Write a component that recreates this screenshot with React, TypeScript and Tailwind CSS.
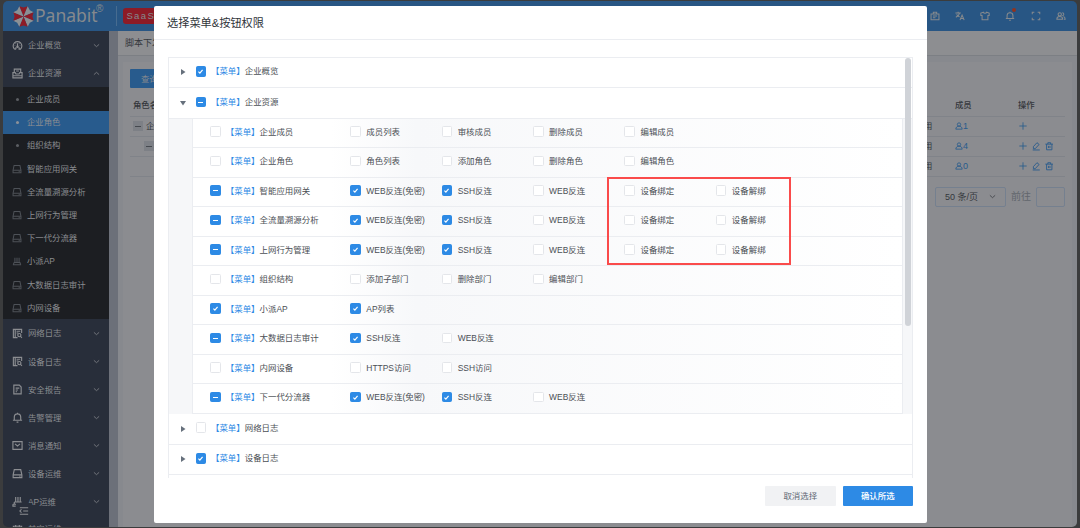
import type { ReactNode } from "react";
import clsx from "clsx";

type CheckState = "on" | "off" | "part";

interface PermissionRow {
  name: string;
  state: CheckState;
  actions: [string, boolean][];
}

const gatewayActions: [string, boolean][] = [
  ["WEB反连(免密)", true],
  ["SSH反连", true],
  ["WEB反连", false],
  ["设备绑定", false],
  ["设备解绑", false],
];

const permissionRows: PermissionRow[] = [
  { name: "企业成员", state: "off", actions: [["成员列表", false], ["审核成员", false], ["删除成员", false], ["编辑成员", false]] },
  { name: "企业角色", state: "off", actions: [["角色列表", false], ["添加角色", false], ["删除角色", false], ["编辑角色", false]] },
  { name: "智能应用网关", state: "part", actions: gatewayActions },
  { name: "全流量溯源分析", state: "part", actions: gatewayActions },
  { name: "上网行为管理", state: "part", actions: gatewayActions },
  { name: "组织结构", state: "off", actions: [["添加子部门", false], ["删除部门", false], ["编辑部门", false]] },
  { name: "小派AP", state: "on", actions: [["AP列表", true]] },
  { name: "大数据日志审计", state: "part", actions: [["SSH反连", true], ["WEB反连", false]] },
  { name: "内网设备", state: "off", actions: [["HTTPS访问", false], ["SSH访问", false]] },
  { name: "下一代分流器", state: "part", actions: gatewayActions.slice(0, 3) },
];

const icons: Record<string, ReactNode> = {
  gauge: (
    <>
      <path d="M5.5 20a9.5 9.5 0 1 1 13 0h-3v-4M8.500 20h-3M8.500 20v-4M12 13V7" />
      <path d="M6 12h1M17 12h1M8 7.500l.7.7M16 7.500l-.7.7" />
      <circle cx="12" cy="14.500" r="1.500" />
    </>
  ),
  archive: <path d="M5 10V2.500h14V10M9 6.500h6M2 10h5l1.500 3h7l1.500-3h5v11.500H2zM2 17h20" />,
  disk: <path d="M5 3.500h14l2.500 11.500v6h-19v-6zM2.500 15h19M16 18h2.500" />,
  router: <path d="M2 21h20M5 15.500h14l2 5.500M5 15.500 3 21M7 15V4M12 15V4M17 15V4" />,
  log: (
    <>
      <path d="M21 11V3H3v18h9M7 3v18M10 7h8M10 11h4" />
      <circle cx="16" cy="15.500" r="3.500" />
      <path d="m18.500 18 3 3.500" />
    </>
  ),
  report: <path d="M4 2.500h12l4 4v15H4zM8 9h8M8 13h5M8 17h3" />,
  bell: <path d="M12 1.500v2M5 18v-7a7 7 0 0 1 14 0v7M2 18h20M10 22h4" />,
  mail: <path d="M2 3.500h20v17H2zM6.500 8.500 12 13l5.500-4.500" />,
  ap: <path d="M8 2v11M13 2v11M18 2v11M5 13h16M5 13v5M2 18h9M2 18v4h6" />,
  calendar: <path d="M3 5h18v17H3zM3 10h18M8 2v5M16 2v5" />,
  badge: <path d="M2.500 7h19v14h-19zM8 7V3h8v4M7 12h10M7 16h6" />,
  translate: <path d="M1 5h13M7.500 2v3M2 15c5-2 8-6 9-10M4 8c1 3 4 5 7 6M12 22l5-12 5 12M14 18h6" />,
  shirt: <path d="M8 3 2 5v6h3v10h14V11h3V5l-6-2c-1 3-7 3-8 0z" />,
  expand: <path d="M3 8V3h5M16 3h5v5M21 16v5h-5M8 21H3v-5" />,
  users: (
    <>
      <circle cx="9" cy="8" r="4" />
      <path d="M2 20c0-9 14-9 14 0zM15 4c5 0 5 7 0 7M18 13c3 1 4 3 4 7h-3" />
    </>
  ),
  user: (
    <>
      <circle cx="12" cy="7.500" r="5" />
      <path d="M2.500 21.500c0-12 19-12 19 0z" />
    </>
  ),
  plus: <path d="M12 1v22M1 12h22" />,
  edit: <path d="m4 13 10-11 6 5L9 19H4zM2 22.500h20" />,
  trash: <path d="M1 6h22M8 6V2h8v4M4.500 6v16h15V6M10 11v6M14 11v6" />,
  fold: <path d="M2 4h20M10 12h12M2 20h20M6 8l-4 4 4 4" />,
  down: <path d="m3 8 9 8 9-8" />,
  up: <path d="m3 16 9-8 9 8" />,
};

const Icon = ({ name, className }: { name: string; className?: string }) => (
  <svg viewBox="0 0 24 24" fill="none" stroke="currentColor" strokeWidth="2.500" className={clsx("shrink-0", className)}>
    {icons[name]}
  </svg>
);

const Logo = () => (
  <svg viewBox="0 0 40 40" className="size-[21px] shrink-0">
    {[0, 45, 90, 135, 180, 225, 270, 315].map((angle, i) => (
      <path
        key={angle}
        d="M20 20 12 .700 20 3 28 .700z"
        fill={i % 2 ? "#8b9095" : "#8d1b26"}
        transform={`rotate(${angle} 20 20)`}
      />
    ))}
  </svg>
);

const Checkbox = ({ state }: { state: CheckState }) => (
  <span
    className={clsx(
      "flex size-[10.500px] shrink-0 items-center justify-center rounded-[1.500px] border",
      state === "off" ? "border-[#e4e6ea] bg-white" : "border-[#2d8ae5] bg-[#2d8ae5]",
    )}
  >
    {state === "on" && (
      <svg viewBox="0 0 10 10" fill="none" stroke="white" strokeWidth="1.300" className="size-[9px] shrink-0">
        <path d="m2.700 5.200 1.600 1.600 3-3.600" />
      </svg>
    )}
    {state === "part" && <span className="h-px w-[5px] bg-white" />}
  </span>
);

const MenuLabel = ({ name }: { name: string }) => (
  <span className="whitespace-nowrap">
    <span className="text-[#2d8ae5]">【菜单】</span>
    {name}
  </span>
);

const GroupRow = ({ name, state, open }: { name: string; state: CheckState; open?: boolean }) => (
  <div className="flex h-[30.700px] shrink-0 items-center border-b border-[#ebedf1] pb-[2px] pl-[11px]">
    <svg viewBox="0 0 6 6" className={clsx("mt-[2px] mr-[10px] size-[6px]", open && "rotate-90")}>
      <path d="M1 0 5.500 3 1 6z" fill="#66707c" />
    </svg>
    <Checkbox state={state} />
    <span className="ml-[5px] flex">
      <MenuLabel name={name} />
    </span>
  </div>
);

const NavItem = ({ icon, label, open }: { icon: string; label: string; open?: boolean }) => (
  <div className="flex h-[28.100px] shrink-0 items-center pr-[9px] pl-[9px]">
    <Icon name={icon} className="size-[11px]" />
    <span className="ml-[5px] flex-1">{label}</span>
    <Icon name={open ? "up" : "down"} className="size-[7px]" />
  </div>
);

const SubItem = ({ icon, label, active }: { icon?: string; label: string; active?: boolean }) => (
  <div className={clsx("flex h-[23.200px] shrink-0 items-center pl-[9px]", active && "bg-[#285b8d]")}>
    <span className="flex w-[10px] justify-center text-[#4d5157]">
      {icon ? (
        <Icon name={icon} className="size-[10px]" />
      ) : (
        <span className={clsx("size-[3px] rounded-full", active ? "bg-[#8b9199]" : "bg-[#5b5e63]")} />
      )}
    </span>
    <span className="ml-[5px]">{label}</span>
  </div>
);

const Sidebar = () => (
  <aside className="relative flex w-[106px] shrink-0 flex-col overflow-hidden bg-[#282e3a] pt-[0.300px] text-[8.400px] text-[#8b8d91]">
    <NavItem icon="gauge" label="企业概览" />
    <NavItem icon="archive" label="企业资源" open />
    <div className="shrink-0 bg-[#1c1e22]">
      <SubItem label="企业成员" />
      <SubItem label="企业角色" active />
      <SubItem label="组织结构" />
      <SubItem icon="disk" label="智能应用网关" />
      <SubItem icon="disk" label="全流量溯源分析" />
      <SubItem icon="disk" label="上网行为管理" />
      <SubItem icon="disk" label="下一代分流器" />
      <SubItem icon="router" label="小派AP" />
      <SubItem icon="disk" label="大数据日志审计" />
      <SubItem icon="disk" label="内网设备" />
    </div>
    <NavItem icon="log" label="网络日志" />
    <NavItem icon="log" label="设备日志" />
    <NavItem icon="report" label="安全报告" />
    <NavItem icon="bell" label="告警管理" />
    <NavItem icon="mail" label="消息通知" />
    <NavItem icon="disk" label="设备运维" />
    <NavItem icon="ap" label="AP运维" />
    <div className="-mt-px">
      <NavItem icon="calendar" label="其它运维" />
    </div>
    <div className="absolute top-[472px] left-[13px] bg-[#282e3a] p-[3px]">
      <Icon name="fold" className="size-[10px]" />
    </div>
  </aside>
);

const Header = () => (
  <header className="flex h-[30px] shrink-0 items-center bg-[#285684] pl-[10px] text-[#85898d]">
    <Logo />
    <span className="ml-px w-[61px] font-['Noto_Sans'] text-[17.500px] leading-none">Panabit</span>
    <span className="mb-[14px] text-[10px] leading-none">®</span>
    <span className="ml-[13px] h-[20px] w-px bg-[#476c90]" />
    <span className="ml-[6px] flex h-[16px] w-[44px] items-center rounded-[3px] bg-[#8d1b26] pl-[3px] text-[9.500px] font-medium tracking-[1.400px]">
      SaaS
    </span>
    <div className="ml-auto flex gap-[15.300px] pr-[11px]">
      <Icon name="badge" className="size-[10px]" />
      <Icon name="translate" className="size-[10px]" />
      <Icon name="shirt" className="size-[10px]" />
      <span className="relative">
        <Icon name="bell" className="size-[10px]" />
        <span className="absolute -top-[3px] left-[7px] size-[4px] rounded-full bg-[#90331f]" />
      </span>
      <Icon name="expand" className="size-[10px]" />
      <Icon name="users" className="size-[10px]" />
    </div>
  </header>
);

const RoleRow = ({ count, editable, child }: { count: string; editable?: boolean; child?: boolean }) => (
  <div className="flex h-[20.200px] items-center border-b border-[#808389]">
    {count !== "0" && (
      <span className={clsx("flex size-[10px] items-center justify-center bg-[#7d8086]", child ? "ml-[14px]" : "ml-[3px]")}>
        <span className="h-px w-[6px] bg-[#45494f]" />
      </span>
    )}
    {!child && <span className="ml-[3px]">企业</span>}
    <div className="ml-auto flex w-[141px] items-center">
      <span className="w-[31px]">用</span>
      <span className="flex w-[64px] items-center text-[9px] text-[#285b8d]">
        <Icon name="user" className="size-[8px]" />
        {count}
      </span>
      <span className="flex gap-[4.500px] text-[#285b8d]">
        <Icon name="plus" className="size-[8px]" />
        {editable && <Icon name="edit" className="size-[8.500px]" />}
        {editable && <Icon name="trash" className="size-[8.500px]" />}
      </span>
    </div>
  </div>
);

const RolePage = () => (
  <main className="flex flex-1 flex-col bg-[#87898e]">
    <div className="flex h-[25px] items-center border-b border-[#7c7f84] bg-[#8d8e91] pl-[7px] text-[9px]">脚本下发</div>
    <div className="mx-[5px] mt-[6px] flex-1 bg-[#8b8c90] px-[7px] pt-[7px]">
      <div className="flex h-[19px] w-[50px] items-center rounded-[1px] bg-[#285b8d] pl-[11px] text-[#85898d]">查询</div>
      <div className="mt-[6px] flex h-[22.500px] items-center border-b border-[#808389] font-medium">
        <span className="pl-[3px]">角色名称</span>
        <div className="ml-auto flex w-[141px]">
          <span className="w-[31px]" />
          <span className="w-[63px]">成员</span>
          <span>操作</span>
        </div>
      </div>
      <RoleRow count="1" />
      <RoleRow count="4" editable child />
      <RoleRow count="0" editable child />
      <div className="mt-[9.500px] flex items-center justify-end text-[9px]">
        <span className="flex h-[20px] w-[71px] items-center justify-between rounded-[2px] border border-[#75808f] px-[9px]">
          50 条/页
          <Icon name="down" className="size-[7px]" />
        </span>
        <span className="ml-[5px] text-[10px] text-[#62666d]">前往</span>
        <span className="ml-[5px] h-[20px] w-[29px] rounded-[2px] border border-[#75808f]" />
      </div>
    </div>
  </main>
);

const PermissionTable = () => (
  <div className="flex">
    <div className="w-[23.500px] shrink-0 bg-[#f6f7f9]" />
    <div className="flex-1 border-l border-[#ebedf1]">
      {permissionRows.map((row) => (
        <div key={row.name} className="flex h-[29.500px] items-center border-b border-[#ebedf1]">
          <div className="flex w-[138px] shrink-0 items-center pb-[3px] pl-[17.300px]">
            <Checkbox state={row.state} />
            <span className="ml-[5px] flex">
              <MenuLabel name={row.name} />
            </span>
          </div>
          <div className="flex h-full flex-1 items-center bg-linear-to-r from-white via-[#f7f8fa] via-15% to-white pb-[3px] pl-[19.300px]">
            {row.actions.map(([label, checked]) => (
              <div key={label} className="flex w-[91.400px] shrink-0 items-center gap-[5.500px] whitespace-nowrap">
                <Checkbox state={checked ? "on" : "off"} />
                {label}
              </div>
            ))}
          </div>
        </div>
      ))}
    </div>
    <div className="w-[10px] shrink-0 border-l border-[#ebedf1] bg-[#f6f7f9]" />
  </div>
);

const PermissionDialog = () => (
  <div className="absolute top-[6px] left-[153.500px] flex h-[516.500px] w-[773.500px] flex-col rounded-[2px] bg-white text-[8.450px] text-[#4b4f55]">
    <div className="flex h-[34px] shrink-0 items-center border-b border-[#ebedf1] pl-[13.500px] text-[11.200px] text-[#30343a]">
      选择菜单&amp;按钮权限
    </div>
    <div className="relative mt-[16.500px] ml-[14px] flex h-[421px] w-[745px] shrink-0 flex-col overflow-hidden border-x border-t border-[#ebedf1]">
      <GroupRow name="企业概览" state="on" />
      <GroupRow name="企业资源" state="part" open />
      <PermissionTable />
      <GroupRow name="网络日志" state="off" />
      <GroupRow name="设备日志" state="on" />
      <div className="absolute top-0 right-px h-[268px] w-[6px] rounded-full bg-[#d0d3d8]" />
      <div className="absolute top-[119px] left-[438.500px] h-[88px] w-[184px] border-2 border-[#fa4b4b]" />
    </div>
    <div className="mt-[8px] mr-[14px] flex justify-end gap-[7px]">
      <button type="button" className="h-[20px] w-[70.500px] rounded-[1px] bg-[#f1f2f4] text-[#606673]">
        取消选择
      </button>
      <button type="button" className="h-[20px] w-[70.500px] rounded-[1px] bg-[#2d8ae5] font-medium text-white">
        确认所选
      </button>
    </div>
  </div>
);

export default function App() {
  return (
    <div className="relative h-[528px] w-[1080px] overflow-hidden bg-[#3b3c3d] px-[3px] pt-px font-['Liberation_Sans','Noto_Sans_CJK_SC',sans-serif] text-[8.400px] leading-[12px] text-[#34373c]">
      <div className="flex h-[526px] flex-col overflow-hidden rounded-[5px]">
        <Header />
        <div className="flex min-h-0 flex-1">
          <Sidebar />
          <div className="w-[9px] shrink-0 bg-[#6c7079]" />
          <RolePage />
        </div>
      </div>
      <PermissionDialog />
    </div>
  );
}
